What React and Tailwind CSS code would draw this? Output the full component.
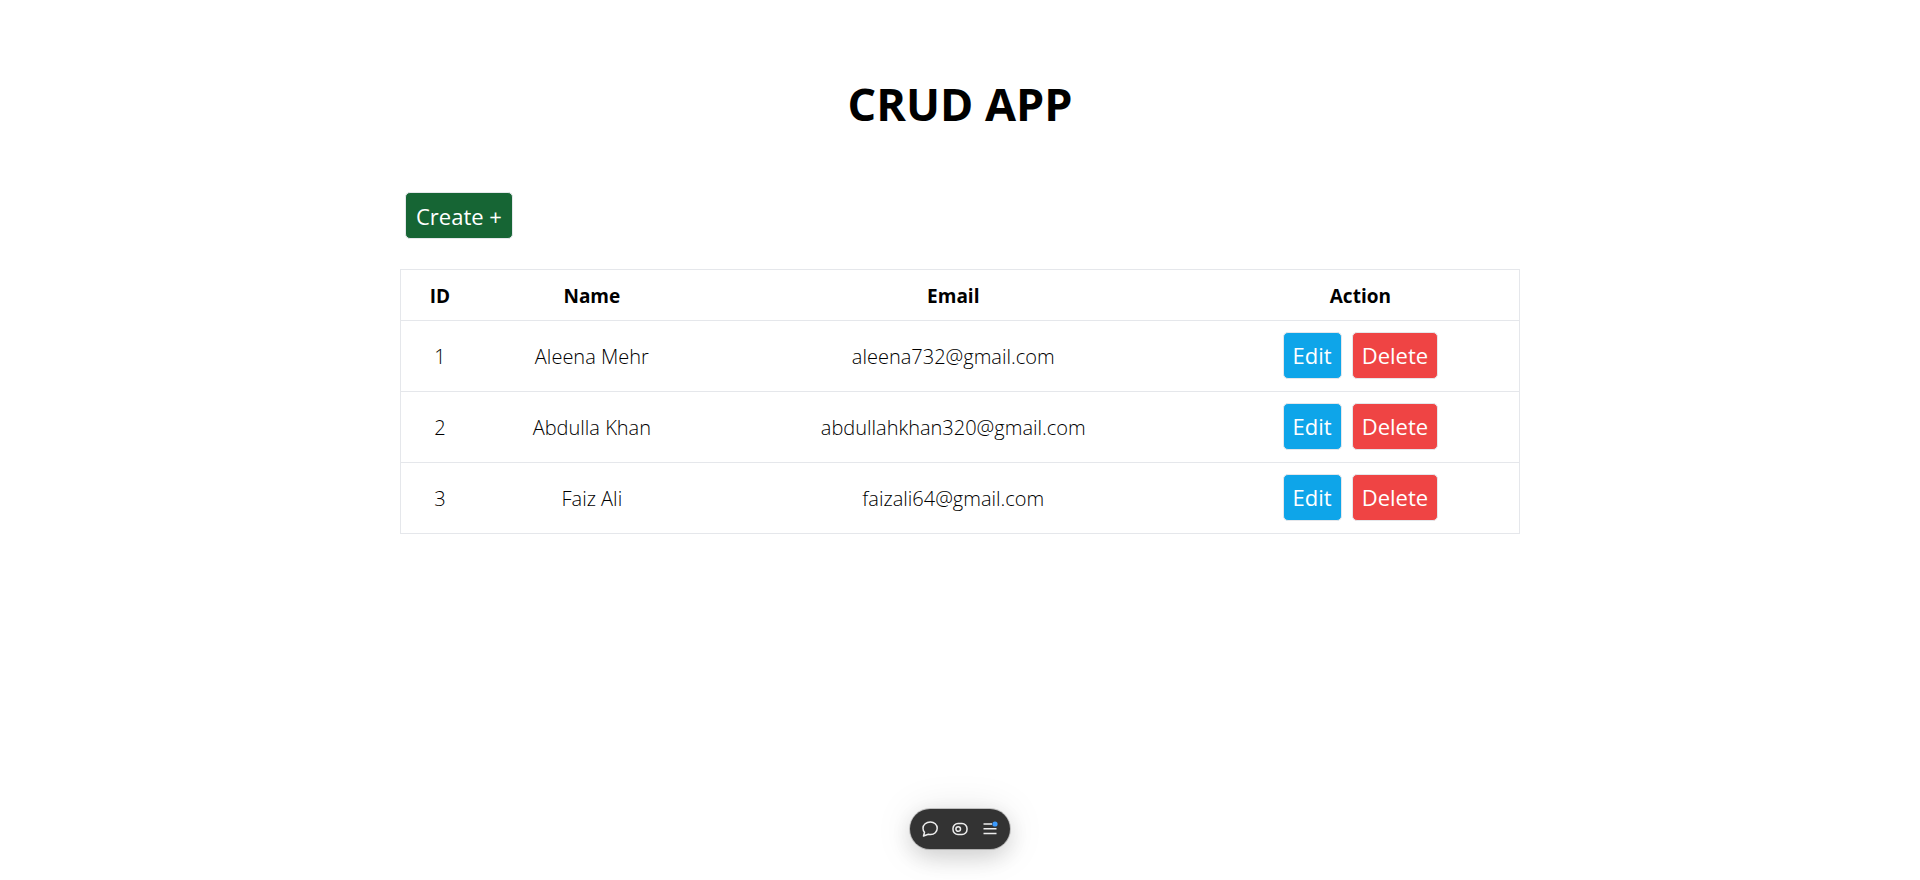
const users = [
  { id: 1, name: "Aleena Mehr", email: "aleena732@gmail.com" },
  { id: 2, name: "Abdulla Khan", email: "abdullahkhan320@gmail.com" },
  { id: 3, name: "Faiz Ali", email: "faizali64@gmail.com" },
];

function ActionButton({ className, children }) {
  return (
    <button
      type="button"
      className={`h-[47px] rounded-[5px] border border-[#e5e7eb] text-[22px] leading-7 text-white ${className}`}
    >
      {children}
    </button>
  );
}

function Toolbar() {
  return (
    <div className="fixed inset-x-0 bottom-[31px] flex justify-center">
      <div className="flex h-10 w-[100px] items-center justify-center gap-[14px] rounded-full bg-[#333333] text-[#ededed] shadow-[0_0_0_1px_rgba(0,0,0,0.2),0_8px_24px_rgba(0,0,0,0.15),0_2px_40px_rgba(0,0,0,0.1)]">
        <button type="button" aria-label="Comment">
          <svg width="16" height="16" viewBox="0 0 16 16" fill="none" stroke="currentColor" strokeWidth="1.5">
            <path d="M8.400 1C12.200 1 15.200 3.600 15.200 7.200s-2.900 6.300-6.600 6.300c-.8 0-1.500-.1-2.200-.3L1.500 15l1-3.800C1.500 10.100 1 8.700 1 7.200 1 3.600 4.200 1 8.400 1z" strokeLinejoin="round" />
          </svg>
        </button>
        <button type="button" aria-label="Draft mode">
          <svg width="16" height="16" viewBox="0 0 16 16" fill="none" stroke="currentColor" strokeWidth="1.5">
            <rect x="1" y="2.500" width="14" height="11" rx="5" />
            <circle cx="6.200" cy="8" r="2.300" />
          </svg>
        </button>
        <button type="button" aria-label="Menu">
          <svg width="16" height="16" viewBox="0 0 16 16" fill="none" stroke="currentColor" strokeWidth="1.500">
            <path d="M1.500 3h8.500M1.500 7.800h13M1.500 12.600h13" />
            <circle cx="13" cy="3" r="2.600" fill="#3b9bff" stroke="none" />
          </svg>
        </button>
      </div>
    </div>
  );
}

export default function App() {
  return (
    <div className="min-h-screen bg-white px-4 pt-[72px] font-['Open_Sans','Noto_Sans',sans-serif] text-black">
      <main className="mx-auto max-w-[1120px]">
        <h1 className="text-center text-[45px] leading-[64px] font-bold">CRUD APP</h1>
        <div className="mt-14 pl-[5px]">
          <ActionButton className="bg-[#166534] px-[10px]">Create +</ActionButton>
        </div>
        <table className="mt-[30px] w-full table-fixed border-collapse border border-[#e5e7eb] text-center text-[20px] leading-7">
          <colgroup>
            <col className="w-[7%]" />
            <col className="w-[20.2%]" />
            <col className="w-[44.4%]" />
            <col className="w-[28.4%]" />
          </colgroup>
          <thead className="text-[19px]">
            <tr className="h-[51px] border-b border-[#e5e7eb]">
              <th className="pt-[2px]">ID</th>
              <th className="pt-[2px]">Name</th>
              <th className="pt-[2px]">Email</th>
              <th className="pt-[2px]">Action</th>
            </tr>
          </thead>
          <tbody>
            {users.map((user) => (
              <tr key={user.id} className="h-[71px] border-b border-[#e5e7eb] font-light">
                <td className="pt-[2px]">{user.id}</td>
                <td className="pt-[2px]">{user.name}</td>
                <td className="pt-[2px]">{user.email}</td>
                <td className="pb-[2px]">
                  <div className="flex justify-center gap-[10px] font-normal">
                    <ActionButton className="bg-[#0ea5e9] px-[9px]">Edit</ActionButton>
                    <ActionButton className="bg-[#ef4444] px-[9px]">Delete</ActionButton>
                  </div>
                </td>
              </tr>
            ))}
          </tbody>
        </table>
      </main>
      <Toolbar />
    </div>
  );
}
